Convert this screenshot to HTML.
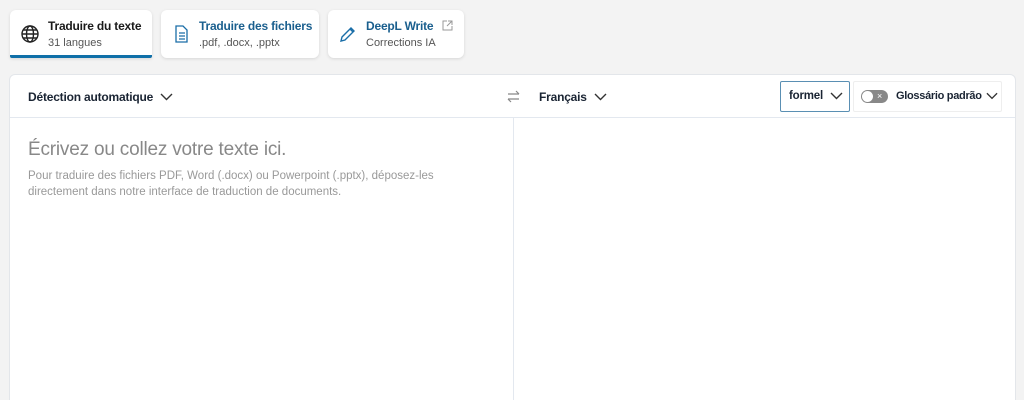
<!DOCTYPE html>
<html><head><meta charset="utf-8"><style>
*{box-sizing:border-box;margin:0;padding:0}
html,body{width:1024px;height:400px;overflow:hidden}
body{background:#f3f3f3;font-family:"Liberation Sans",sans-serif;position:relative;white-space:nowrap}
.tab{position:absolute;top:10px;height:48px;background:#fff;border-radius:6px;box-shadow:0 1px 3px rgba(0,0,0,.12)}
.tab .t{position:absolute;left:38px;top:9px;font-size:12px;font-weight:bold;color:#1a1a1a;letter-spacing:-0.2px}
.tab .s{position:absolute;left:38px;top:27px;font-size:11px;color:#555}
.tab svg{position:absolute;left:10px;top:14px}
.panel{position:absolute;left:9px;top:74px;width:1007px;height:340px;background:#fff;border:1px solid #e3e6ea;border-radius:6px}
.hdr{position:absolute;left:0;top:0;right:0;height:43px;border-bottom:1px solid #e3e8ef}
.txt{position:absolute;font-size:12px;font-weight:bold;color:#1a2433;letter-spacing:-0.2px;display:flex;align-items:center;gap:7px}
</style></head><body>
<div class="tab" style="left:10px;width:142px;border-bottom:3px solid #0f6fa8;border-radius:6px 6px 2px 2px">
<svg width="20" height="20" viewBox="0 0 20 20" fill="none" stroke="#222" stroke-width="1.4"><circle cx="10" cy="10" r="8"/><ellipse cx="10" cy="10" rx="3.5" ry="8"/><path d="M2 10h16M3.5 6h13M3.5 14h13"/></svg>
<div class="t">Traduire du texte</div><div class="s">31 langues</div></div>
<div class="tab" style="left:161px;width:158px">
<svg width="20" height="20" viewBox="0 0 20 20" fill="none" stroke="#1a6ea8" stroke-width="1.3"><path d="M5 2h7l4 4v12H5z M8 9h6M8 12h6M8 15h6"/></svg>
<div class="t" style="color:#1a5f8e">Traduire des fichiers</div><div class="s">.pdf, .docx, .pptx</div></div>
<div class="tab" style="left:328px;width:136px">
<svg width="20" height="20" viewBox="0 0 20 20" fill="none" stroke="#1a6ea8" stroke-width="1.4"><path d="M3 17l1-4 9-9 3 3-9 9z M12 5l3 3"/></svg>
<div class="t" style="color:#1a5f8e">DeepL Write</div><div class="s">Corrections IA</div>
<svg width="11" height="11" viewBox="0 0 11 11" style="left:114px;top:10px" fill="none" stroke="#999" stroke-width="1"><path d="M5 1H1v9h9V6M6 1h4v4M10 1L5 6"/></svg></div>
<div class="panel">
<div class="hdr">
<div class="txt" style="left:18px;top:15px">Détection automatique <svg width="13" height="8" viewBox="0 0 13 8" fill="none" stroke="#333" stroke-width="1.4"><path d="M1 1l5.5 5.5L12 1"/></svg></div>
<svg style="position:absolute;left:496px;top:14px" width="15" height="15" viewBox="0 0 15 15" fill="none" stroke="#888" stroke-width="1.2"><path d="M2 5h11M10 2l3 3M13 10H2M5 13l-3-3"/></svg>
<div class="txt" style="left:529px;top:15px">Français <svg width="13" height="8" viewBox="0 0 13 8" fill="none" stroke="#333" stroke-width="1.4"><path d="M1 1l5.5 5.5L12 1"/></svg></div>
<div style="position:absolute;left:770px;top:6px;width:70px;height:31px;border:1px solid #5a8fb3;border-radius:2px"></div>
<div class="txt" style="left:779px;top:15px;font-size:11.5px">formel <svg width="13" height="8" viewBox="0 0 13 8" fill="none" stroke="#333" stroke-width="1.4"><path d="M1 1l5.5 5.5L12 1"/></svg></div>
<div style="position:absolute;left:843px;top:6px;width:149px;height:31px;border:1px solid #eee;border-radius:2px"></div>
<div style="position:absolute;left:851px;top:15px;width:27px;height:13px;border-radius:7px;background:#888"><div style="width:11px;height:11px;margin:1px;border-radius:50%;background:#fff"></div><span style="position:absolute;left:16px;top:0px;font-size:9px;line-height:12px;color:#fff">×</span></div>
<div class="txt" style="left:886px;top:15px;font-size:11px;font-weight:bold;gap:4px;letter-spacing:-0.3px">Glossário padrão <svg width="12" height="8" viewBox="0 0 13 8" fill="none" stroke="#333" stroke-width="1.4"><path d="M1 1l5.5 5.5L12 1"/></svg></div>
</div>
<div style="position:absolute;left:503px;top:43px;width:1px;height:300px;background:#e3e8ef"></div>
<div style="position:absolute;left:18px;top:64px;font-size:19px;color:#888;letter-spacing:-0.2px">Écrivez ou collez votre texte ici.</div>
<div style="position:absolute;left:18px;top:93px;font-size:11.5px;line-height:16px;color:#999;width:440px;white-space:normal">Pour traduire des fichiers PDF, Word (.docx) ou Powerpoint (.pptx), déposez-les directement dans notre interface de traduction de documents.</div>
</div>
</body></html>
